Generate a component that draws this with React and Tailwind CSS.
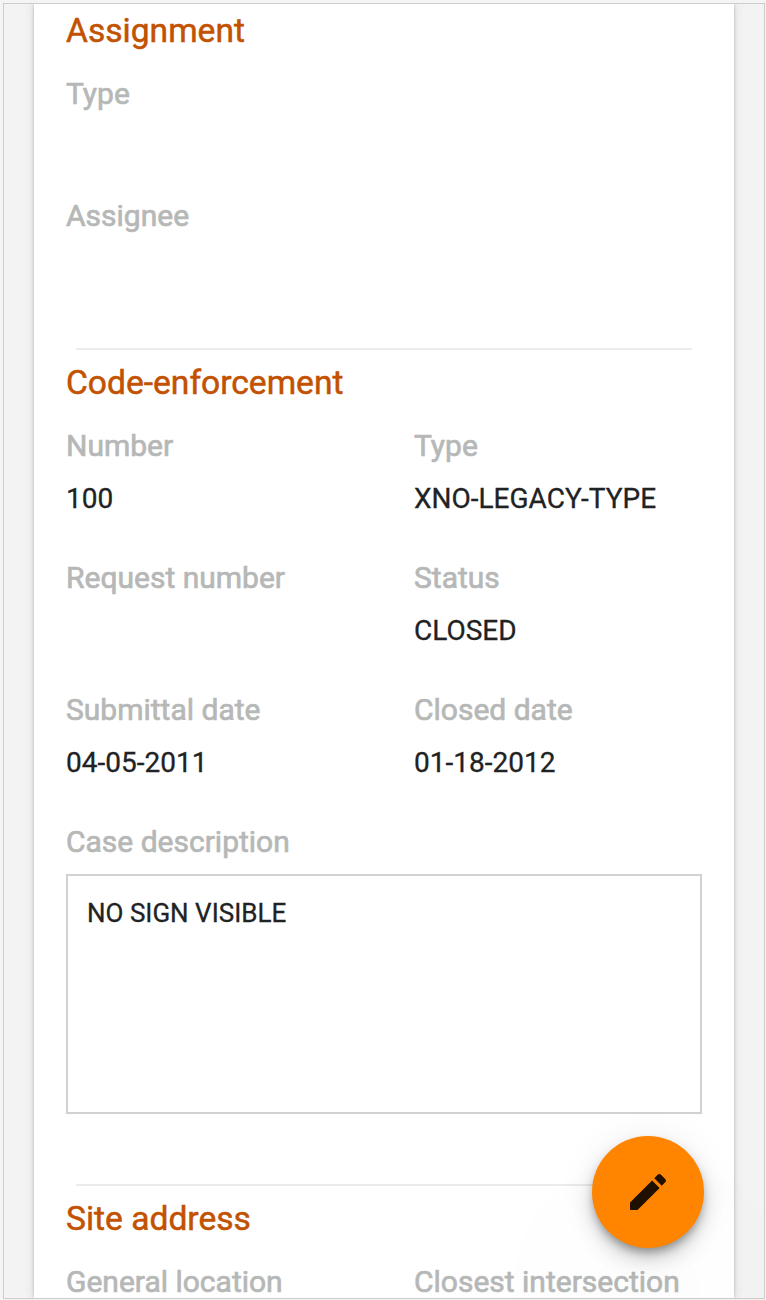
function Field({ label, value, className = '' }) {
  return (
    <div className={className}>
      <div className="h-[35px] whitespace-nowrap text-[30px] leading-[33px] text-[#b6b8b7] [-webkit-text-stroke:0.7px_currentColor]">{label}</div>
      <div className="mt-[18px] h-[34px] whitespace-nowrap text-[28px] leading-[34px] text-[#212223]">{value}</div>
    </div>
  );
}

function Heading({ children }) {
  return <h2 className="h-10 whitespace-nowrap text-[33.6px] leading-[42px] text-[#c25100] [-webkit-text-stroke:0.5px_currentColor]">{children}</h2>;
}

export default function App() {
  return (
    <div className="relative h-[1300px] w-[766px] overflow-hidden bg-[#f4f4f4] pl-[3px] pt-[3px] font-[Roboto,sans-serif] [-webkit-text-stroke:0.3px_currentColor]">
      <div className="flex h-[1296px] w-[762px] justify-center overflow-hidden border border-[#cccccc] bg-[#f3f3f3]">
        <main className="h-[1294px] w-[700px] overflow-hidden bg-white px-8 pt-[6px] shadow-[0_0_3px_rgba(0,0,0,0.2),0_0_10px_rgba(0,0,0,0.12)]">
          <section>
            <Heading>Assignment</Heading>
            <Field label="Type" className="mt-[27px] h-[122px]" />
            <Field label="Assignee" className="h-[149px]" />
          </section>
          <hr className="mx-[10px] border-0 border-t-2 border-[#ebebeb]" />
          <section className="pt-3">
            <Heading>Code-enforcement</Heading>
            <div className="mt-[27px] grid grid-cols-[348px_288px] auto-rows-[132px]">
              <Field label="Number" value="100" />
              <Field label="Type" value="XNO-LEGACY-TYPE" />
              <Field label="Request number" />
              <Field label="Status" value="CLOSED" />
              <Field label="Submittal date" value="04-05-2011" />
              <Field label="Closed date" value="01-18-2012" />
            </div>
            <div className="h-[49px] text-[30px] leading-[33px] text-[#b6b8b7] [-webkit-text-stroke:0.7px_currentColor]">Case description</div>
            <div className="h-60 border-2 border-[#d3d0d0] px-[19px] pt-5 text-[26px] leading-[34px] text-[#212223]">NO SIGN VISIBLE</div>
          </section>
          <hr className="mx-[10px] mt-[70px] border-0 border-t-2 border-[#ebebeb]" />
          <section className="pt-3">
            <Heading>Site address</Heading>
            <div className="mt-[27px] grid grid-cols-[348px_288px]">
              <Field label="General location" />
              <Field label="Closest intersection" />
            </div>
          </section>
        </main>
      </div>
      <button aria-label="Edit" className="absolute left-[592px] top-[1136px] flex size-28 items-center justify-center rounded-full bg-[#ff8500] shadow-[0_6px_10px_-2px_rgba(0,0,0,0.35),0_12px_20px_rgba(0,0,0,0.14),0_2px_36px_rgba(0,0,0,0.08),0_100px_200px_rgba(0,0,0,0.06)]">
        <svg viewBox="0 0 24 24" className="size-12 fill-[#1f1000]">
          <path d="M3 17.25V21h3.75L17.81 9.94l-3.75-3.75L3 17.25zM20.71 7.04a1 1 0 0 0 0-1.41l-2.34-2.34a1 1 0 0 0-1.41 0l-1.83 1.83 3.75 3.75 1.83-1.83z" />
        </svg>
      </button>
    </div>
  );
}
